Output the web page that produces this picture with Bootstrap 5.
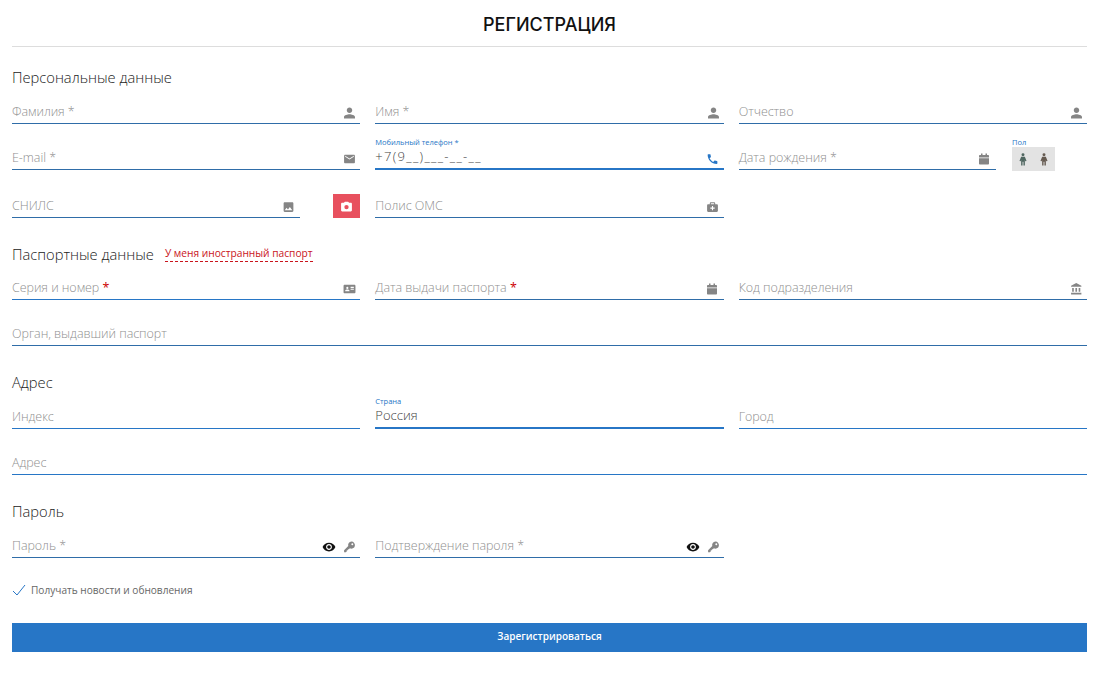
<!DOCTYPE html>
<html lang="ru">
<head>
<meta charset="utf-8">
<title>Регистрация</title>
<link href="https://cdn.jsdelivr.net/npm/bootstrap@5.3.0/dist/css/bootstrap.min.css" rel="stylesheet">
<style>
body{font-family:"Open Sans","Noto Sans",sans-serif;background:#fff;color:#333;}
.sheet{padding:0 10px 0 12px;height:674px;overflow:hidden;}
.page-title{font-family:"Inter","Open Sans",sans-serif;font-size:18px;font-weight:500;color:#111;text-align:center;line-height:24px;padding-top:13px;padding-bottom:9px;margin:0;border-bottom:1px solid #ddd;}
.sect{font-size:14.7px;font-weight:300;color:#222;line-height:18px;padding-bottom:2px;margin:0;}
.sect-1{margin-top:21px;margin-bottom:0;}
.sect-2{margin-top:0;margin-bottom:0;}
.sect-3{margin-top:27px;margin-bottom:0;}
.sect-4{margin-top:27px;margin-bottom:0;}
.frow{--bs-gutter-x:15px;--bs-gutter-y:0;}
.fld{height:36px;margin-bottom:10px;border-bottom:1px solid #2f6da8;display:flex;align-items:flex-end;justify-content:space-between;padding-bottom:2px;position:relative;}
.fld-text{font-size:12.5px;line-height:18px;color:#8f8f8f;font-weight:300;letter-spacing:-.05px;}
.star{color:#c00;font-weight:400;}
.ico{width:13px;height:14px;fill:#858585;flex:none;margin-right:4px;margin-bottom:1px;}
.ico-cal{width:12px;margin-right:6px;}
.ico-eye{width:14px;fill:#111;margin-right:7px;}
.ico-blue{fill:#2776c6;margin-right:5px;margin-bottom:-1px;}
.ico-shift{margin-right:5px;}
.icons{display:flex;align-items:center;}
.fld-active{border-bottom:2px solid #2776c6;padding-bottom:3px;}
.fld-top{font-size:7.5px;line-height:9px;color:#2776c6;position:absolute;top:4px;left:0;}
.fld-value{font-size:13px;line-height:18px;color:#444;font-weight:300;}
.fld-mask{letter-spacing:1.3px;}
.row3{margin-top:2px;}
.bright{border-bottom-color:#2776c6;}
.gender-box{margin-left:16px;margin-right:32px;flex:none;}
.gender-lab{font-size:7.5px;line-height:9px;color:#2776c6;margin-top:4px;}
.gender{width:43px;height:24px;background:#e3e3e3;display:flex;align-items:center;justify-content:space-around;padding:0;}
.gender svg{width:12px;height:13px;margin:0;}
.man-a{fill:#4f6660;}
.man-b{fill:#655a50;}
.camera-btn{width:27px;height:24px;background:#e8505e;border:0;border-radius:0;padding:0;display:flex;align-items:center;justify-content:center;margin-left:33px;flex:none;align-self:flex-end;margin-bottom:10px;}
.camera-btn svg{width:13px;height:13px;fill:#fff;}
.foreign{font-size:10.2px;line-height:14px;color:#c9141c;border-bottom:1px dashed #c9141c;margin-left:11px;padding-bottom:1px;font-weight:400;position:relative;top:-1px;}
.pass-head{display:flex;align-items:center;padding-top:17px;margin-bottom:-1px;}
.consent{display:flex;align-items:center;gap:5px;font-size:10.1px;line-height:14px;color:#666;margin-top:15px;}
.consent svg{width:14px;height:12px;fill:none;stroke:#2776c6;stroke-width:1;}
.submit-btn{display:block;width:100%;height:29px;background:#2776c6;border:0;border-radius:0;color:#fff;font-size:10px;font-weight:600;line-height:25px;padding:0 0 2px;margin-top:26px;}
</style>
</head>
<body>
<svg width="0" height="0" class="position-absolute">
<symbol id="i-user" viewBox="2.500 2.500 19 19"><path d="M12 12c2.210 0 4-1.790 4-4s-1.790-4-4-4-4 1.790-4 4 1.790 4 4 4zm0 2c-2.670 0-8 1.340-8 4v2h16v-2c0-2.660-5.330-4-8-4z"/></symbol>
<symbol id="i-mail" viewBox="0 0 24 24"><path d="M20 4H4c-1.100 0-1.990.9-1.990 2L2 18c0 1.100.9 2 2 2h16c1.100 0 2-.9 2-2V6c0-1.100-.9-2-2-2zm0 4l-8 5-8-5V6l8 5 8-5v2z"/></symbol>
<symbol id="i-phone" viewBox="0 0 24 24"><path d="M6.620 10.790c1.440 2.830 3.760 5.140 6.590 6.590l2.200-2.200c.27-.27.67-.36 1.020-.24 1.120.37 2.330.57 3.570.57.55 0 1 .45 1 1V20c0 .55-.45 1-1 1-9.390 0-17-7.610-17-17 0-.55.45-1 1-1h3.500c.55 0 1 .45 1 1 0 1.250.2 2.450.57 3.570.11.35.03.74-.25 1.020l-2.200 2.200z"/></symbol>
<symbol id="i-cal" viewBox="0 0 24 24"><path d="M6 1h3v3h6V1h3v3h2c1.100 0 2 .9 2 2v3H2V6c0-1.100.9-2 2-2h2V1zM2 10.500h20V21c0 1.100-.9 2-2 2H4c-1.100 0-2-.9-2-2V10.500z"/></symbol>
<symbol id="i-image" viewBox="0 0 24 24"><path d="M21 19V5c0-1.100-.9-2-2-2H5c-1.100 0-2 .9-2 2v14c0 1.100.9 2 2 2h14c1.100 0 2-.9 2-2zM8.500 13.500l2.500 3.010L14.500 12l4.500 6H5l3.500-4.500z"/></symbol>
<symbol id="i-med" viewBox="0 0 24 24"><path fill-rule="evenodd" d="M9 3h6c1.100 0 2 .9 2 2v2h3c1.100 0 2 .9 2 2v10c0 1.100-.9 2-2 2H4c-1.100 0-2-.9-2-2V9c0-1.100.9-2 2-2h3V5c0-1.100.9-2 2-2zm0 2v2h6V5H9zm2 5v3H8v2h3v3h2v-3h3v-2h-3v-3h-2z"/></symbol>
<symbol id="i-id" viewBox="0 0 24 24"><path fill-rule="evenodd" d="M3 4h18c1.100 0 2 .9 2 2v12c0 1.100-.9 2-2 2H3c-1.100 0-2-.9-2-2V6c0-1.100.9-2 2-2zm5 4a2 2 0 1 0 0 4 2 2 0 0 0 0-4zm-4 8h8v-1c0-1.500-2.500-2.300-4-2.300S4 13.500 4 15v1zm10-8v2h6V8h-6zm0 3.500v2h6v-2h-6z"/></symbol>
<symbol id="i-bank" viewBox="0 0 24 24"><path d="M4 10v7h3v-7H4zm6 0v7h3v-7h-3zM2 22h19v-3H2v3zm14-12v7h3v-7h-3zm-4.500-9L2 6v2h19V6l-9.500-5z"/></symbol>
<symbol id="i-eye" viewBox="0 0 24 24"><path d="M12 4.500C7 4.500 2.730 7.610 1 12c1.730 4.390 6 7.500 11 7.500s9.270-3.110 11-7.500c-1.730-4.390-6-7.500-11-7.500zM12 17c-2.760 0-5-2.240-5-5s2.240-5 5-5 5 2.240 5 5-2.240 5-5 5zm0-8c-1.660 0-3 1.340-3 3s1.340 3 3 3 3-1.340 3-3-1.340-3-3-3z"/></symbol>
<symbol id="i-key" viewBox="0 0 24 24"><path fill-rule="evenodd" d="M15.500 2a6.500 6.500 0 1 1-2.900 12.300L11 16H9v2H7v2l-1.500 1.500H2v-3.500l7.700-7.700A6.500 6.500 0 0 1 15.500 2zm1.700 3a1.800 1.800 0 1 0 0 3.600 1.800 1.800 0 0 0 0-3.600z"/></symbol>
<symbol id="i-cam" viewBox="0 0 24 24"><path fill-rule="evenodd" d="M9 3L7.200 5H4c-1.100 0-2 .9-2 2v12c0 1.100.9 2 2 2h16c1.100 0 2-.9 2-2V7c0-1.100-.9-2-2-2h-3.200L15 3H9zm3 6a4 4 0 1 0 0 8 4 4 0 0 0 0-8z"/></symbol>
<symbol id="i-man" viewBox="0 0 12 14"><circle cx="6" cy="1.800" r="1.600"/><path d="M4 4h4l1.800 4.500-1.300.4L8 7.500V13.500H6.500V9.500h-1V13.500H4V7.500L3.500 8.900l-1.300-.4z"/></symbol>
</svg>
<div class="sheet">
<h1 class="page-title">РЕГИСТРАЦИЯ</h1>
<form>
<h2 class="sect sect-1">Персональные данные</h2>
<div class="row frow">
  <div class="col-4"><div class="fld"><span class="fld-text">Фамилия *</span><svg class="ico"><use href="#i-user"/></svg></div></div>
  <div class="col-4"><div class="fld"><span class="fld-text">Имя *</span><svg class="ico"><use href="#i-user"/></svg></div></div>
  <div class="col-4"><div class="fld"><span class="fld-text">Отчество</span><svg class="ico"><use href="#i-user"/></svg></div></div>
</div>
<div class="row frow">
  <div class="col-4"><div class="fld"><span class="fld-text">E-mail *</span><svg class="ico"><use href="#i-mail"/></svg></div></div>
  <div class="col-4"><div class="fld fld-active"><span class="fld-top">Мобильный телефон *</span><span class="fld-value fld-mask">+7(9__)___-__-__</span><svg class="ico ico-blue"><use href="#i-phone"/></svg></div></div>
  <div class="col-4 d-flex">
    <div class="fld flex-grow-1"><span class="fld-text">Дата рождения *</span><svg class="ico ico-cal"><use href="#i-cal"/></svg></div>
    <div class="gender-box"><div class="gender-lab">Пол</div><div class="gender"><svg class="man-a"><use href="#i-man"/></svg><svg class="man-b"><use href="#i-man"/></svg></div></div>
  </div>
</div>
<div class="row frow row3">
  <div class="col-4 d-flex">
    <div class="fld flex-grow-1"><span class="fld-text">СНИЛС</span><svg class="ico ico-shift"><use href="#i-image"/></svg></div>
    <button type="button" class="btn camera-btn" aria-label="Камера"><svg><use href="#i-cam"/></svg></button>
  </div>
  <div class="col-4"><div class="fld"><span class="fld-text">Полис ОМС</span><svg class="ico ico-shift"><use href="#i-med"/></svg></div></div>
</div>
<div class="pass-head"><h2 class="sect sect-2">Паспортные данные</h2><span class="foreign">У меня иностранный паспорт</span></div>
<div class="row frow">
  <div class="col-4"><div class="fld bright"><span class="fld-text">Серия и номер <span class="star">*</span></span><svg class="ico"><use href="#i-id"/></svg></div></div>
  <div class="col-4"><div class="fld"><span class="fld-text">Дата выдачи паспорта <span class="star">*</span></span><svg class="ico ico-cal"><use href="#i-cal"/></svg></div></div>
  <div class="col-4"><div class="fld"><span class="fld-text">Код подразделения</span><svg class="ico"><use href="#i-bank"/></svg></div></div>
</div>
<div class="fld"><span class="fld-text">Орган, выдавший паспорт</span></div>
<h2 class="sect sect-3">Адрес</h2>
<div class="row frow">
  <div class="col-4"><div class="fld bright"><span class="fld-text">Индекс</span></div></div>
  <div class="col-4"><div class="fld fld-active"><span class="fld-top">Страна</span><span class="fld-value">Россия</span></div></div>
  <div class="col-4"><div class="fld bright"><span class="fld-text">Город</span></div></div>
</div>
<div class="fld bright"><span class="fld-text">Адрес</span></div>
<h2 class="sect sect-4">Пароль</h2>
<div class="row frow">
  <div class="col-4"><div class="fld"><span class="fld-text">Пароль *</span><span class="icons"><svg class="ico ico-eye"><use href="#i-eye"/></svg><svg class="ico"><use href="#i-key"/></svg></span></div></div>
  <div class="col-4"><div class="fld"><span class="fld-text">Подтверждение пароля *</span><span class="icons"><svg class="ico ico-eye"><use href="#i-eye"/></svg><svg class="ico"><use href="#i-key"/></svg></span></div></div>
</div>
<div class="consent"><svg viewBox="0 0 14 12"><path d="M1 7l4 4 8-10"/></svg><span>Получать новости и обновления</span></div>
<button type="button" class="btn submit-btn">Зарегистрироваться</button>
</form>
</div>
</body>
</html>
